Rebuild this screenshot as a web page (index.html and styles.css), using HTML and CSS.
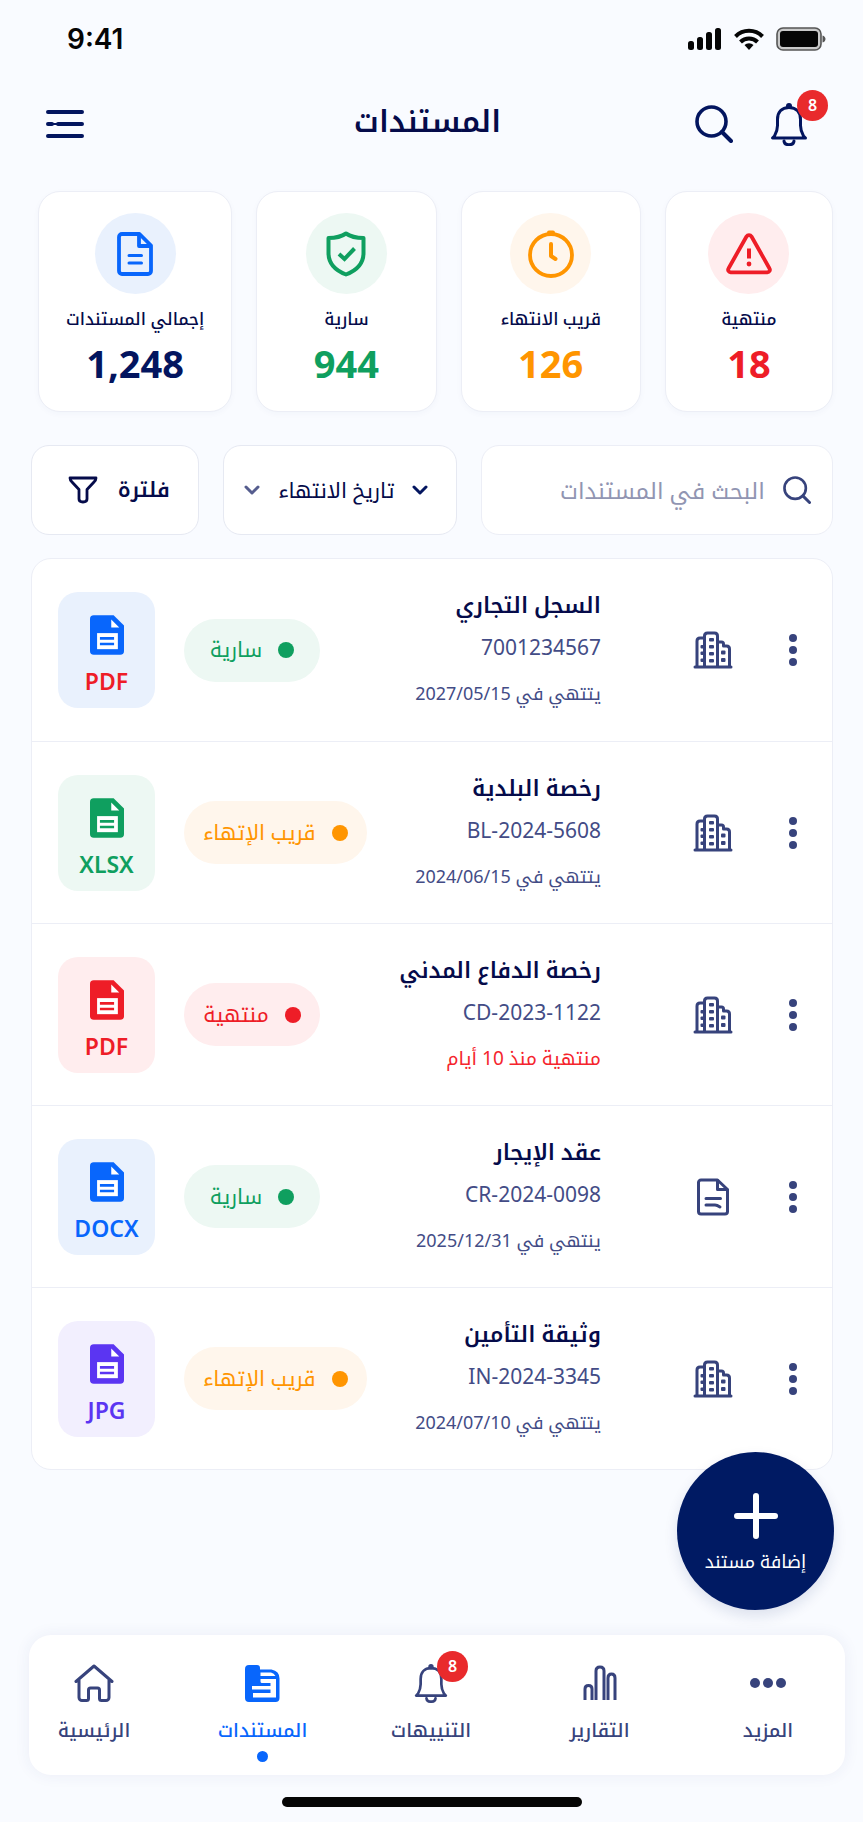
FILE: index.html
```html
<!DOCTYPE html>
<html lang="ar" dir="rtl">
<head>
<meta charset="utf-8">
<meta name="viewport" content="width=device-width, initial-scale=1">
<title>المستندات</title>
<link rel="stylesheet" href="styles.css">
</head>
<body>
<svg class="sprite" aria-hidden="true">
  <symbol id="i-bell" viewBox="0 0 40 44">
    <path d="M20 5.500c-7.500 0-11.500 5-11.500 12v6c0 4-1 7-3 10.500L3.500 36h33l-2-2c-2-3.500-3-6.500-3-10.500v-6c0-7-4-12-11.500-12z" fill="none" stroke="currentColor" stroke-width="3" stroke-linejoin="round"/>
    <circle cx="20" cy="4" r="3" fill="currentColor"/>
    <path d="M15 39c.5 5 9.500 5 10 0" fill="none" stroke="currentColor" stroke-width="3" stroke-linecap="round"/>
  </symbol>
  <symbol id="i-search" viewBox="0 0 38 38">
    <circle cx="16.500" cy="16.500" r="14.500" fill="none" stroke="currentColor" stroke-width="3.600"/>
    <path d="M27 27l9 9" stroke="currentColor" stroke-width="4" stroke-linecap="round"/>
  </symbol>
  <symbol id="i-building" viewBox="0 0 40 38">
    <g fill="none" stroke="currentColor" stroke-width="3" stroke-linejoin="round">
      <path d="M4 35V10q0-3 3-3h3.500M11.500 35V5q0-3 3-3h7q3 0 3 3v30M24.500 11h4q2 0 2 2v2h3q3 0 3 3v17"/>
      <path d="M2 36h36" stroke-linecap="round"/>
    </g>
    <g fill="currentColor">
      <rect x="16" y="7" width="5" height="3.600" rx="1"/><rect x="16" y="14" width="5" height="3.600" rx="1"/><rect x="16" y="21" width="5" height="3.600" rx="1"/><rect x="16" y="28" width="5" height="3.600" rx="1"/>
      <rect x="7.500" y="14" width="4" height="3.600" rx="1"/><rect x="7.500" y="20.500" width="4" height="3.600" rx="1"/><rect x="7.500" y="27.500" width="4" height="3.600" rx="1"/>
      <rect x="28" y="19.500" width="4.500" height="4" rx="1"/><rect x="28" y="27" width="4.500" height="4" rx="1"/>
    </g>
  </symbol>
  <symbol id="i-doc" viewBox="0 0 36 44">
    <g fill="none" stroke="currentColor" stroke-width="3.800" stroke-linejoin="round" stroke-linecap="round">
      <path d="M5 2h17.500l11.500 11.500V39a3 3 0 0 1-3 3H5a3 3 0 0 1-3-3V5a3 3 0 0 1 3-3z"/>
      <path d="M22 3v11h11"/>
      <path d="M12 23.500h12.500M12 31h12.500" stroke-width="3"/>
    </g>
  </symbol>
  <symbol id="i-lease" viewBox="0 0 32 38">
    <g fill="none" stroke="currentColor" stroke-width="3" stroke-linejoin="round" stroke-linecap="round">
      <path d="M4 2h16.500l10 9.500V33.500a2.500 2.500 0 0 1-2.500 2.500H4a2.500 2.500 0 0 1-2.500-2.500v-29A2.500 2.500 0 0 1 4 2z"/>
      <path d="M20.500 2.500v9h9.500M9 20.500h14.500M9 27h9q2 0 5 2"/>
    </g>
  </symbol>
  <symbol id="i-file" viewBox="0 0 36 42">
    <path d="M4 0h21l11 11v27a4 4 0 0 1-4 4H4a4 4 0 0 1-4-4V4a4 4 0 0 1 4-4z" fill="currentColor"/>
    <path d="M22.500 4.500v8.500h8.500z" fill="#fff"/>
    <path d="M7.500 19h22v17h-22z" fill="#fff"/>
    <path d="M10.500 24.500h15M10.500 30.500h15" stroke="currentColor" stroke-width="2.800"/>
  </symbol>
  <symbol id="i-chevron" viewBox="0 0 16 10">
    <path d="M2 2l6 6 6-6" fill="none" stroke="currentColor" stroke-width="3" stroke-linecap="round" stroke-linejoin="round"/>
  </symbol>
  <symbol id="i-kebab" viewBox="0 0 8 32">
    <g fill="currentColor"><circle cx="4" cy="4" r="4"/><circle cx="4" cy="16" r="4"/><circle cx="4" cy="28" r="4"/></g>
  </symbol>
</svg>

<div class="screen">
  <div class="status-bar" dir="ltr">
    <time class="clock">9:41</time>
    <div class="status-icons">
      <svg width="34" height="22" viewBox="0 0 34 22"><g fill="#050505"><rect x="0" y="13" width="6" height="9" rx="2.500"/><rect x="9" y="9" width="6" height="13" rx="2.500"/><rect x="18" y="4" width="6" height="18" rx="2.500"/><rect x="27" y="0" width="6" height="22" rx="2.500"/></g></svg>
      <svg width="30" height="22" viewBox="0 0 30 22"><g fill="none" stroke="#050505" stroke-width="4"><path d="M1.500 8.500a19 19 0 0 1 27 0"/><path d="M6.500 14a12 12 0 0 1 17 0"/></g><path d="M15 22l-4.500-5a6.500 6.500 0 0 1 9 0z" fill="#050505"/></svg>
      <svg width="50" height="24" viewBox="0 0 50 24"><rect x="1" y="1" width="44" height="22" rx="6" fill="#c9c9c9" stroke="#555" stroke-width="1.600"/><rect x="4" y="4" width="38" height="16" rx="3" fill="#050505"/><path d="M46.500 8.500c4 1 4 6 0 7z" fill="#555"/></svg>
    </div>
  </div>

  <header class="app-bar">
    <div class="app-actions">
      <button class="icon-btn" aria-label="التنبيهات"><svg class="ic-bell"><use href="#i-bell"/></svg><span class="count">8</span></button>
      <button class="icon-btn" aria-label="بحث"><svg class="ic-search"><use href="#i-search"/></svg></button>
    </div>
    <h1 class="app-title">المستندات</h1>
    <button class="icon-btn menu-btn" aria-label="القائمة">
      <svg width="38" height="30" viewBox="0 0 38 30"><path d="M2 3h34M2 15h4M12 15h24M2 27h34" stroke="currentColor" stroke-width="4" stroke-linecap="round"/><path d="M5 15h8" stroke="currentColor" stroke-width="2"/></svg>
    </button>
  </header>

  <main class="content">
    <section class="stats">
      <article class="stat red">
        <span class="stat-icon"><svg width="46" height="42" viewBox="0 0 46 42"><path d="M20.500 3.500a3 3 0 0 1 5 0l18 32a2.500 2.500 0 0 1-2.300 3.800H4.800a2.500 2.500 0 0 1-2.300-3.800z" fill="none" stroke="currentColor" stroke-width="3.800" stroke-linejoin="round"/><path d="M23 15.500v10" stroke="currentColor" stroke-width="4"/><circle cx="23" cy="31" r="2.400" fill="currentColor"/></svg></span>
        <span class="stat-label">منتهية</span><strong class="stat-value">18</strong>
      </article>
      <article class="stat orange">
        <span class="stat-icon"><svg width="48" height="48" viewBox="0 0 48 48"><circle cx="24" cy="25" r="21" fill="none" stroke="currentColor" stroke-width="3.800"/><path d="M24 14v12l4.500 3" fill="none" stroke="currentColor" stroke-width="4" stroke-linecap="round" stroke-linejoin="round"/><path d="M22 2.500h4" stroke="currentColor" stroke-width="4" stroke-linecap="round"/></svg></span>
        <span class="stat-label">قريب الانتهاء</span><strong class="stat-value">126</strong>
      </article>
      <article class="stat green">
        <span class="stat-icon"><svg width="40" height="46" viewBox="0 0 40 46"><path d="M20 2.500c5 3.500 11 4.500 17.500 4.500v15c0 10-7 17.500-17.500 21.500C9.500 39.500 2.500 32 2.500 22V7C9 7 15 6 20 2.500z" fill="none" stroke="currentColor" stroke-width="4" stroke-linejoin="round"/><path d="M13 23l5.500 5 10-10.500" fill="none" stroke="currentColor" stroke-width="4"/></svg></span>
        <span class="stat-label">سارية</span><strong class="stat-value">944</strong>
      </article>
      <article class="stat blue">
        <span class="stat-icon"><svg width="36" height="44"><use href="#i-doc"/></svg></span>
        <span class="stat-label">إجمالي المستندات</span><strong class="stat-value total">1,248</strong>
      </article>
    </section>

    <form class="toolbar">
      <label class="field search-field">
        <svg class="ic-search-sm"><use href="#i-search"/></svg>
        <input type="search" placeholder="البحث في المستندات" aria-label="البحث في المستندات">
      </label>
      <label class="field sort-field">
        <svg class="ic-chevron"><use href="#i-chevron"/></svg>
        <select aria-label="ترتيب حسب"><option>تاريخ الانتهاء</option></select>
        <svg class="ic-chevron soft"><use href="#i-chevron"/></svg>
      </label>
      <button class="field filter-btn" type="button">
        <span>فلترة</span>
        <svg width="30" height="28" viewBox="0 0 30 28"><path d="M2 2h26c0 2-1 3-2 4l-7 7.500V23c0 2-1.500 3-4 3s-4-1-4-3v-9.500L4 6C3 5 2 4 2 2z" fill="none" stroke="currentColor" stroke-width="2.800" stroke-linejoin="round"/></svg>
      </button>
    </form>

    <ul class="docs">
      <li class="doc">
        <button class="kebab" aria-label="خيارات"><svg width="8" height="32"><use href="#i-kebab"/></svg></button>
        <svg class="kind"><use href="#i-building"/></svg>
        <div class="doc-text"><h2>السجل التجاري</h2><p class="doc-no">7001234567</p><p class="doc-date">يتتهي في 2027/05/15</p></div>
        <span class="badge green">سارية</span>
        <span class="tile blue"><svg width="34" height="40"><use href="#i-file"/></svg><b class="ext red">PDF</b></span>
      </li>
      <li class="doc">
        <button class="kebab" aria-label="خيارات"><svg width="8" height="32"><use href="#i-kebab"/></svg></button>
        <svg class="kind"><use href="#i-building"/></svg>
        <div class="doc-text"><h2>رخصة البلدية</h2><p class="doc-no">BL-2024-5608</p><p class="doc-date">يتتهي في 2024/06/15</p></div>
        <span class="badge orange">قريب الإتهاء</span>
        <span class="tile green"><svg width="34" height="40"><use href="#i-file"/></svg><b class="ext">XLSX</b></span>
      </li>
      <li class="doc">
        <button class="kebab" aria-label="خيارات"><svg width="8" height="32"><use href="#i-kebab"/></svg></button>
        <svg class="kind"><use href="#i-building"/></svg>
        <div class="doc-text"><h2>رخصة الدفاع المدني</h2><p class="doc-no">CD-2023-1122</p><p class="doc-date late">منتهية منذ 10 أيام</p></div>
        <span class="badge red">منتهية</span>
        <span class="tile red"><svg width="34" height="40"><use href="#i-file"/></svg><b class="ext">PDF</b></span>
      </li>
      <li class="doc">
        <button class="kebab" aria-label="خيارات"><svg width="8" height="32"><use href="#i-kebab"/></svg></button>
        <svg class="kind"><use href="#i-lease"/></svg>
        <div class="doc-text"><h2>عقد الإيجار</h2><p class="doc-no">CR-2024-0098</p><p class="doc-date">ينتهي في 2025/12/31</p></div>
        <span class="badge green">سارية</span>
        <span class="tile blue"><svg width="34" height="40"><use href="#i-file"/></svg><b class="ext">DOCX</b></span>
      </li>
      <li class="doc">
        <button class="kebab" aria-label="خيارات"><svg width="8" height="32"><use href="#i-kebab"/></svg></button>
        <svg class="kind"><use href="#i-building"/></svg>
        <div class="doc-text"><h2>وثيقة التأمين</h2><p class="doc-no">IN-2024-3345</p><p class="doc-date">يتتهي في 2024/07/10</p></div>
        <span class="badge orange">قريب الإتهاء</span>
        <span class="tile purple"><svg width="34" height="40"><use href="#i-file"/></svg><b class="ext">JPG</b></span>
      </li>
    </ul>
  </main>

  <footer class="dock">
    <button class="fab">
      <svg width="44" height="46" viewBox="0 0 44 46"><path d="M22 3v40M3 23h38" stroke="#fff" stroke-width="6" stroke-linecap="round"/></svg>
      <span>إضافة مستند</span>
    </button>
    <nav class="tabs">
      <a class="tab" href="#more"><span class="tab-icon"><svg width="36" height="10" viewBox="0 0 36 10"><g fill="currentColor"><circle cx="5" cy="5" r="5"/><circle cx="18" cy="5" r="5"/><circle cx="31" cy="5" r="5"/></g></svg></span>المزيد</a>
      <a class="tab" href="#reports"><span class="tab-icon"><svg width="34" height="36" viewBox="0 0 34 36"><path d="M2 35V24q0-3.500 3.500-3.500T9 24v11M13 35V6q0-4 4-4t4 4v29M25 35V13q0-4 3.500-4t3.500 4v22" fill="none" stroke="currentColor" stroke-width="3"/></svg></span>التقارير</a>
      <a class="tab" href="#alerts"><span class="tab-icon"><svg width="36" height="40"><use href="#i-bell"/></svg><span class="count">8</span></span>التنييهات</a>
      <a class="tab active" href="#docs" aria-current="page"><span class="tab-icon"><svg width="35" height="37" viewBox="0 0 35 37"><path d="M4 0h8q3 0 3 3v1.500h11.500q8 1.500 8 9V33q0 4-4 4H4q-4 0-4-4V4q0-4 4-4z" fill="currentColor"/><path d="M15.500 7.500H26q3 .5 4.500 3.500h-15zM15.500 14H31v18.500H8V28h17.500v-3.500H7V21h18.500v-3H17q-1.500 0-1.500-1.500z" fill="#fff"/></svg></span>المستندات</a>
      <a class="tab" href="#home"><span class="tab-icon"><svg width="40" height="38" viewBox="0 0 40 38"><path d="M2 17.500L20 2l18 15.500M5 16v17.500a3 3 0 0 0 3 3h4.500a2 2 0 0 0 2-2V26q0-2 2-2h7q2 0 2 2v8.500a2 2 0 0 0 2 2H32a3 3 0 0 0 3-3V16" fill="none" stroke="currentColor" stroke-width="3" stroke-linejoin="round" stroke-linecap="round"/></svg></span>الرئيسية</a>
    </nav>
    <div class="home-indicator"></div>
  </footer>
</div>
</body>
</html>
```
FILE: styles.css
```css
:root {
  --navy: #03155f;
  --ink: #050b4a;
  --slate: #37437c;
  --line: #eceef6;
  --blue: #0866fc;
  --green: #0f9f5f;
  --orange: #ff9500;
  --red: #ee1d27;
}

* { box-sizing: border-box; }

body {
  margin: 0;
  background: #f9fbff;
  color: var(--ink);
  font-family: "Noto Sans", "Noto Kufi Arabic", "Noto Sans Arabic", "DejaVu Sans", sans-serif;
}

h1, h2, p, ul { margin: 0; padding: 0; }
button, input, select { font: inherit; color: inherit; border: 0; background: none; padding: 0; }
button { cursor: pointer; }
svg { display: block; flex: none; }
.sprite { position: absolute; width: 0; height: 0; }

.blue { color: var(--blue); --tint: #e9f1fd; }
.green { color: var(--green); --tint: #edf8f3; }
.orange { color: var(--orange); --tint: #fff6ec; }
.red { color: var(--red); --tint: #ffedee; }
.purple { color: #5b35f2; --tint: #f2effe; }

.screen { display: flex; flex-direction: column; min-height: 100vh; }

.status-bar {
  display: flex;
  align-items: center;
  justify-content: space-between;
  height: 78px;
  padding: 0 37px 0 67px;
}
.clock { font: 600 28px/32px Inter, sans-serif; color: #050505; }
.status-icons { display: flex; align-items: center; gap: 12px; }

.app-bar {
  display: grid;
  grid-template-columns: 1fr auto 1fr;
  align-items: center;
  height: 92px;
  padding: 0 54px 0 46px;
  color: var(--navy);
}
.app-actions { display: flex; align-items: center; gap: 36px; }
.icon-btn { position: relative; }
.menu-btn { justify-self: end; }
.app-title { padding-bottom: 6px; font-size: 30px; line-height: 40px; font-weight: 600; color: var(--ink); }
.ic-bell { width: 40px; height: 44px; }
.ic-search { width: 38px; height: 38px; }

.count {
  position: absolute;
  top: -12px;
  right: -19px;
  width: 31px;
  height: 31px;
  border-radius: 50%;
  background: #e92a2c;
  color: #fff;
  font-size: 16px;
  font-weight: 600;
  line-height: 31px;
  text-align: center;
}

.content { padding: 21px 30px 0 31px; }

.stats {
  display: grid;
  grid-template-columns: 168fr 180fr 180fr 194fr;
  gap: 24px;
  padding-left: 7px;
}
.stat {
  display: flex;
  flex-direction: column;
  align-items: center;
  height: 221px;
  padding-top: 21px;
  border: 1px solid var(--line);
  border-radius: 22px;
  background: #fff;
  box-shadow: 0 2px 6px rgba(30, 50, 120, .03);
}
.stat-icon {
  display: grid;
  place-items: center;
  width: 81px;
  height: 81px;
  border-radius: 50%;
  background: var(--tint);
}
.stat-label { margin-top: 11px; font-size: 17px; line-height: 28px; font-weight: 500; color: var(--ink); white-space: nowrap; }
.stat-value { margin-top: 8px; font-size: 38px; line-height: 44px; font-weight: 700; }
.total { color: var(--navy); }

.toolbar {
  display: grid;
  grid-template-columns: 352fr 234fr 168fr;
  gap: 24px;
  margin-top: 33px;
}
.field {
  display: flex;
  align-items: center;
  min-width: 0;
  height: 90px;
  border: 1px solid #e6e9f2;
  border-radius: 18px;
  background: #fff;
  font-size: 21px;
}
.search-field { gap: 18px; padding: 0 21px; border-color: var(--line); color: var(--slate); }
.search-field input { flex: 1; min-width: 0; height: 60px; outline: 0; font-size: 23px; }
.search-field input::placeholder { color: #9195b2; opacity: 1; line-height: 60px; }
.ic-search-sm { width: 28px; height: 28px; }
.sort-field { justify-content: space-between; padding: 0 28px 0 20px; }
.sort-field select { appearance: none; height: 60px; outline: 0; line-height: 60px; }
.ic-chevron { width: 16px; height: 10px; color: var(--navy); }
.soft { color: #555d8e; }
.filter-btn { justify-content: space-between; padding: 0 28px 0 36px; font-weight: 600; }

.docs {
  margin-top: 23px;
  border: 1px solid var(--line);
  border-radius: 20px;
  background: #fff;
  list-style: none;
}
.doc { display: flex; align-items: center; height: 182px; padding: 0 23px 0 26px; }
.doc + .doc { border-top: 1px solid var(--line); }
.kebab { display: grid; place-items: center; width: 32px; height: 48px; color: var(--slate); }
.kind { width: 40px; height: 38px; margin-inline: 44px 92px; color: var(--slate); }
.doc-text { flex: 1; min-width: 0; white-space: nowrap; }
.doc-text h2 { font-size: 22px; line-height: 40px; font-weight: 600; }
.doc-no { font-size: 21px; line-height: 46px; color: #434c86; }
.doc-date { font-size: 18px; line-height: 46px; color: #434c86; }
.late { font-size: 19px; color: #f5252d; }

.badge {
  display: flex;
  align-items: center;
  justify-content: center;
  gap: 16px;
  min-width: 136px;
  height: 63px;
  padding: 0 19px;
  border-radius: 32px;
  background: var(--tint);
  font-size: 21px;
  white-space: nowrap;
}
.badge::before { content: ""; width: 16px; height: 16px; border-radius: 50%; background: currentColor; }

.tile {
  display: flex;
  flex-direction: column;
  align-items: center;
  gap: 12px;
  width: 97px;
  height: 116px;
  margin-inline-start: 29px;
  padding-top: 23px;
  border-radius: 20px;
  background: var(--tint);
}
.ext { font-size: 23px; line-height: 28px; font-weight: 600; }

.dock { position: relative; margin-top: auto; padding-bottom: 15px; }
.fab {
  position: absolute;
  right: 29px;
  bottom: calc(100% + 25px);
  display: flex;
  flex-direction: column;
  align-items: center;
  gap: 10px;
  width: 157px;
  height: 158px;
  padding-top: 41px;
  border-radius: 50%;
  background: #001a63;
  color: #fff;
  font-size: 18px;
  line-height: 24px;
  white-space: nowrap;
  box-shadow: 0 6px 14px rgba(20, 40, 110, .12);
}
.tabs {
  display: flex;
  justify-content: space-between;
  height: 140px;
  margin: 0 18px 0 29px;
  padding: 0 31px 0 19px;
  border-radius: 22px;
  background: #fff;
  box-shadow: 0 0 16px rgba(40, 60, 130, .07);
}
.tab {
  display: flex;
  flex-direction: column;
  align-items: center;
  width: 92px;
  padding-top: 28px;
  color: var(--slate);
  font-size: 19px;
  line-height: 28px;
  text-decoration: none;
  white-space: nowrap;
  font-weight: 500;
}
.tab-icon { position: relative; display: grid; place-items: center; height: 40px; margin-bottom: 13px; }
.active { color: var(--blue); }
.active::after { content: ""; width: 11px; height: 11px; margin-top: 7px; border-radius: 50%; background: currentColor; }
.home-indicator { width: 300px; height: 10px; margin: 22px auto 0; border-radius: 5px; background: #050505; }
```
